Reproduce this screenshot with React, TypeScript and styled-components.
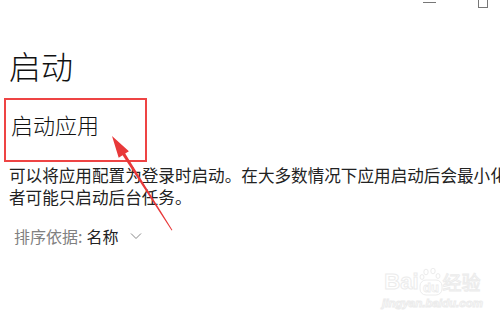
import { createGlobalStyle, styled } from "styled-components";

const GlobalStyle = createGlobalStyle`
  html, body {
    margin: 0;
    padding: 0;
    background: #ffffff;
    overflow: hidden;
  }
  body {
    font-family: "Noto Sans CJK SC", "Noto Sans", sans-serif;
    color: #1a1a1a;
  }
`;

const Page = styled.div`
  position: relative;
  width: 500px;
  height: 331px;
  overflow: hidden;
`;

const TitleBar = styled.div`
  display: flex;
  justify-content: flex-end;
  align-items: flex-start;
  gap: 42px;
  height: 10px;
  padding-right: 12px;
`;

const MinButton = styled.div`
  width: 13px;
  height: 1px;
  margin-top: 2px;
  background: #777777;
`;

const MaxButton = styled.div`
  width: 10px;
  height: 10px;
  margin-top: -2px;
  box-sizing: border-box;
  border: 1px solid #777777;
`;

const Content = styled.main`
  padding-left: 9px;
`;

const Title = styled.h1`
  margin: 39px 0 0;
  font-size: 32px;
  line-height: 32px;
  font-weight: 300;
  color: #111111;
`;

const Highlight = styled.section`
  width: 143px;
  height: 64px;
  margin: 17px 0 0 -5px;
  padding: 13px 0 0 5px;
  box-sizing: border-box;
  border: 2px solid #ee4444;
`;

const SubTitle = styled.h2`
  margin: 0;
  font-size: 22px;
  line-height: 22px;
  font-weight: 300;
  color: #111111;
`;

const Description = styled.p`
  width: 540px;
  margin: 2px 0 0;
  font-size: 16.6px;
  line-height: 22px;
  color: #222222;
`;

const SortRow = styled.div`
  display: flex;
  align-items: center;
  margin: 17px 0 0 5px;
  font-size: 16px;
  line-height: 22px;
`;

const SortLabel = styled.span`
  color: #808080;
`;

const SortValue = styled.span`
  margin-left: 4px;
  color: #222222;
`;

const Chevron = styled.svg`
  margin-left: 12px;
  width: 12px;
  height: 8px;
`;

const Overlay = styled.svg`
  position: absolute;
  left: 0;
  top: 0;
  pointer-events: none;
`;

const Watermark = styled.div`
  position: absolute;
  left: 382px;
  top: 268px;
  display: flex;
  flex-direction: column;
  align-items: center;
  color: #ffffff;
  -webkit-text-stroke: 1px #ececec;
  font-family: "Liberation Sans", sans-serif;
`;

const MarkRow = styled.div`
  display: flex;
  align-items: flex-end;
  font-size: 22px;
  font-weight: 700;
  line-height: 28px;
`;

const MarkCjk = styled.span`
  font-family: "Noto Sans CJK SC", sans-serif;
  font-size: 19px;
  font-weight: 400;
`;

const MarkUrl = styled.div`
  font-size: 11.5px;
  font-weight: 700;
  font-style: italic;
  line-height: 14px;
`;

const App = () => {
  return (
    <Page>
      <GlobalStyle />
      <TitleBar>
        <MinButton />
        <MaxButton />
      </TitleBar>
      <Content>
        <Title>启动</Title>
        <Highlight>
          <SubTitle>启动应用</SubTitle>
        </Highlight>
        <Description>
          可以将应用配置为登录时启动。在大多数情况下应用启动后会最小化，或者可能只启动后台任务。
        </Description>
        <SortRow>
          <SortLabel>排序依据:</SortLabel>
          <SortValue>名称</SortValue>
          <Chevron viewBox="0 0 12 8">
            <polyline points="1,1.5 6,6.5 11,1.5" fill="none" stroke="#888" strokeWidth="1" />
          </Chevron>
        </SortRow>
      </Content>
      <Watermark>
        <MarkRow>
          Bai
          <svg width="24" height="28" viewBox="0 0 24 28">
            <g fill="#fff" stroke="#ececec" strokeWidth="1">
              <ellipse cx="7" cy="4" rx="2.2" ry="2.8" />
              <ellipse cx="14" cy="3" rx="2.2" ry="2.8" />
              <ellipse cx="3" cy="9" rx="2" ry="2.4" />
              <ellipse cx="19" cy="8" rx="2" ry="2.4" />
              <rect x="1" y="12" width="22" height="15" rx="6" />
            </g>
            <text x="12" y="24" textAnchor="middle" fontSize="13" fontWeight="700" fill="#fff" stroke="#ececec" strokeWidth="0.8" fontFamily="Liberation Sans, sans-serif">du</text>
          </svg>
          <MarkCjk>经验</MarkCjk>
        </MarkRow>
        <MarkUrl>jingyan.baidu.com</MarkUrl>
      </Watermark>
      <Overlay width="500" height="331" viewBox="0 0 500 331">
        <polygon
          points="112,136 128.9,151.3 125.2,153.6 172.4,230 171.6,230.5 122.6,155.3 118.7,157.7"
          fill="#e8393a"
        />
      </Overlay>
    </Page>
  );
};

export default App;
